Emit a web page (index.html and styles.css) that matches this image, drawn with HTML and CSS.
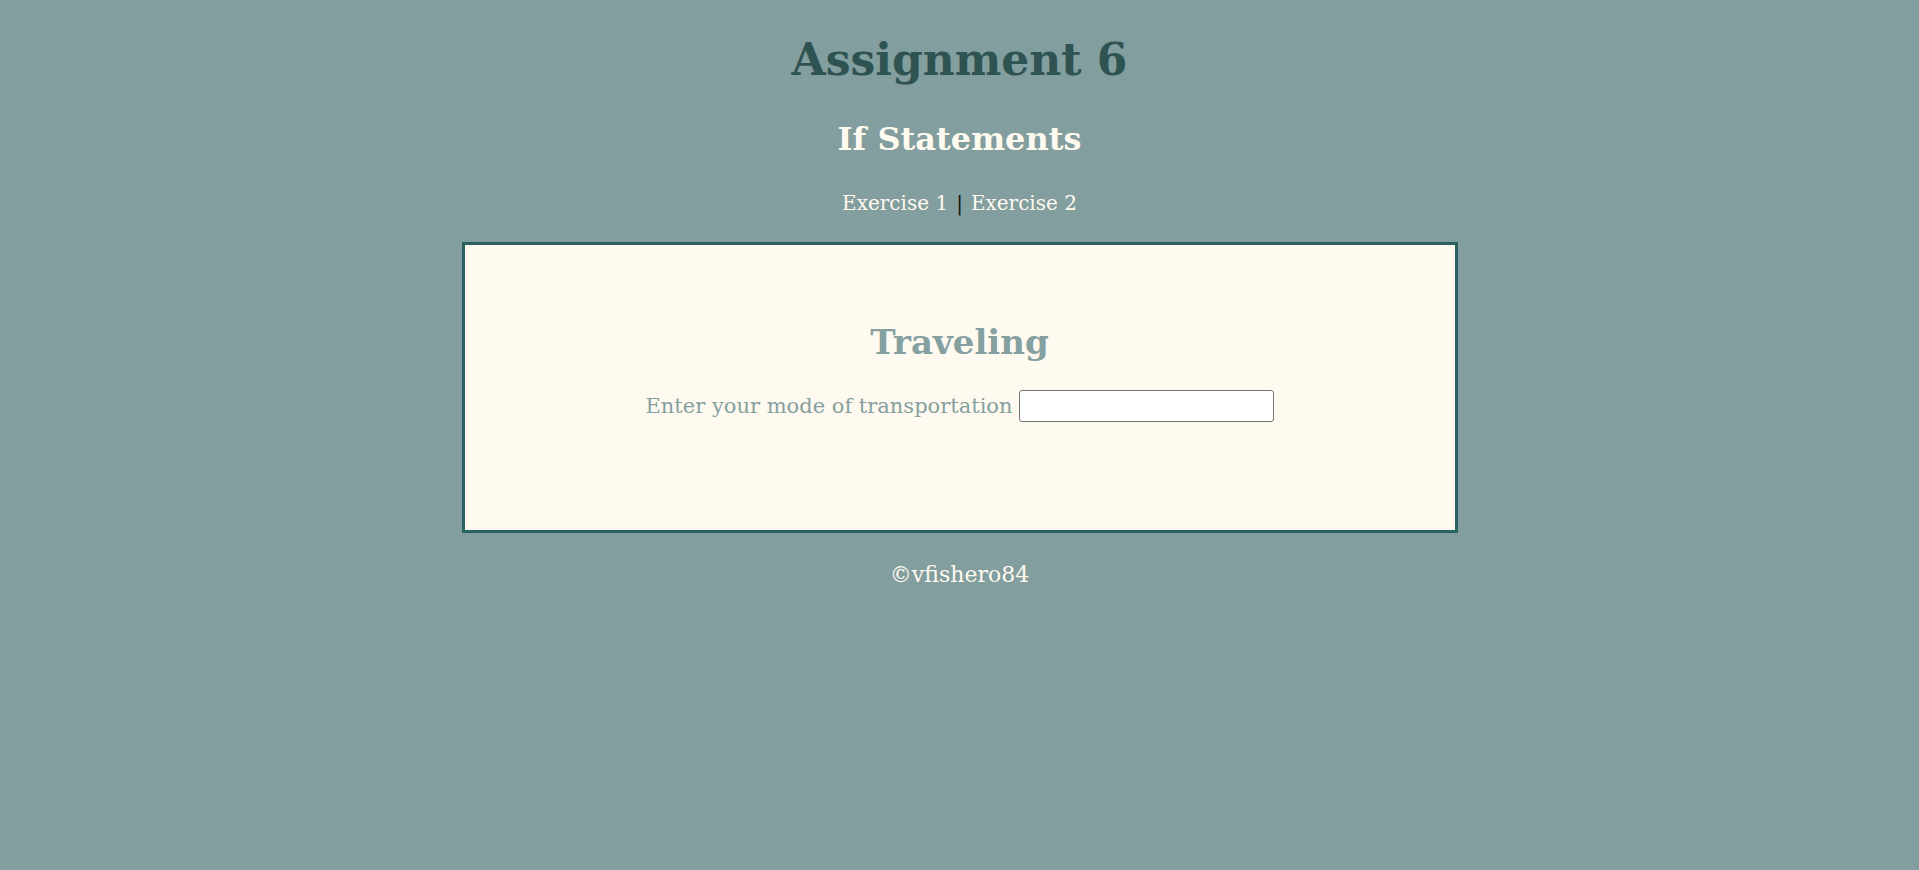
FILE: index.html
```html
<!DOCTYPE html>
<html lang="en">
<head>
<meta charset="utf-8">
<title>Assignment 6</title>
<link rel="stylesheet" href="styles.css">
</head>
<body>
<header class="site-header">
  <h1 class="title">Assignment 6</h1>
  <h2 class="subtitle">If Statements</h2>
  <nav class="nav">
    <a class="nav-link" href="#">Exercise 1</a>
    <span class="nav-sep">|</span>
    <a class="nav-link" href="#">Exercise 2</a>
  </nav>
</header>
<main class="card">
  <h3 class="card-title">Traveling</h3>
  <div class="field">
    <label class="field-label" for="mode">Enter your mode of transportation</label>
    <input class="field-input" type="text" id="mode">
  </div>
</main>
<footer class="footer">&copy;vfishero84</footer>
</body>
</html>
```

FILE: styles.css
```css
html, body {
  margin: 0;
  padding: 0;
}
body {
  background: #839e9e;
  font-family: Georgia, "DejaVu Serif", serif;
  color: #000;
  min-height: 870px;
}
.site-header {
  display: flex;
  flex-direction: column;
  align-items: center;
  padding-top: 32px;
}
.title {
  margin: 0;
  font-size: 44px;
  line-height: 56px;
  font-weight: bold;
  color: #2f5352;
}
.subtitle {
  margin: 31px 0 0;
  font-size: 32px;
  line-height: 40px;
  font-weight: bold;
  color: #fffaef;
}
.nav {
  margin-top: 32px;
  display: flex;
  gap: 8px;
  font-size: 20px;
  line-height: 24px;
}
.nav-link {
  color: #fffaef;
  text-decoration: none;
}
.nav-sep {
  color: #111;
}
.card {
  box-sizing: border-box;
  width: 996px;
  height: 291px;
  margin: 27px auto 0;
  background: #fffaef;
  border: 3px solid #2a6262;
  display: flex;
  flex-direction: column;
  align-items: center;
  padding-top: 77px;
}
.card-title {
  margin: 0;
  font-size: 34px;
  line-height: 40px;
  font-weight: bold;
  color: #85a0a0;
}
.field {
  margin-top: 28px;
  display: flex;
  align-items: center;
  gap: 6px;
}
.field-label {
  font-size: 21px;
  color: #85a0a0;
}
.field-input {
  box-sizing: border-box;
  width: 255px;
  height: 32px;
  border: 1px solid #767676;
  border-radius: 3px;
  background: #fff;
  padding: 1px 2px;
}
.footer {
  margin-top: 29px;
  text-align: center;
  font-size: 22px;
  color: #fffaef;
}
```
